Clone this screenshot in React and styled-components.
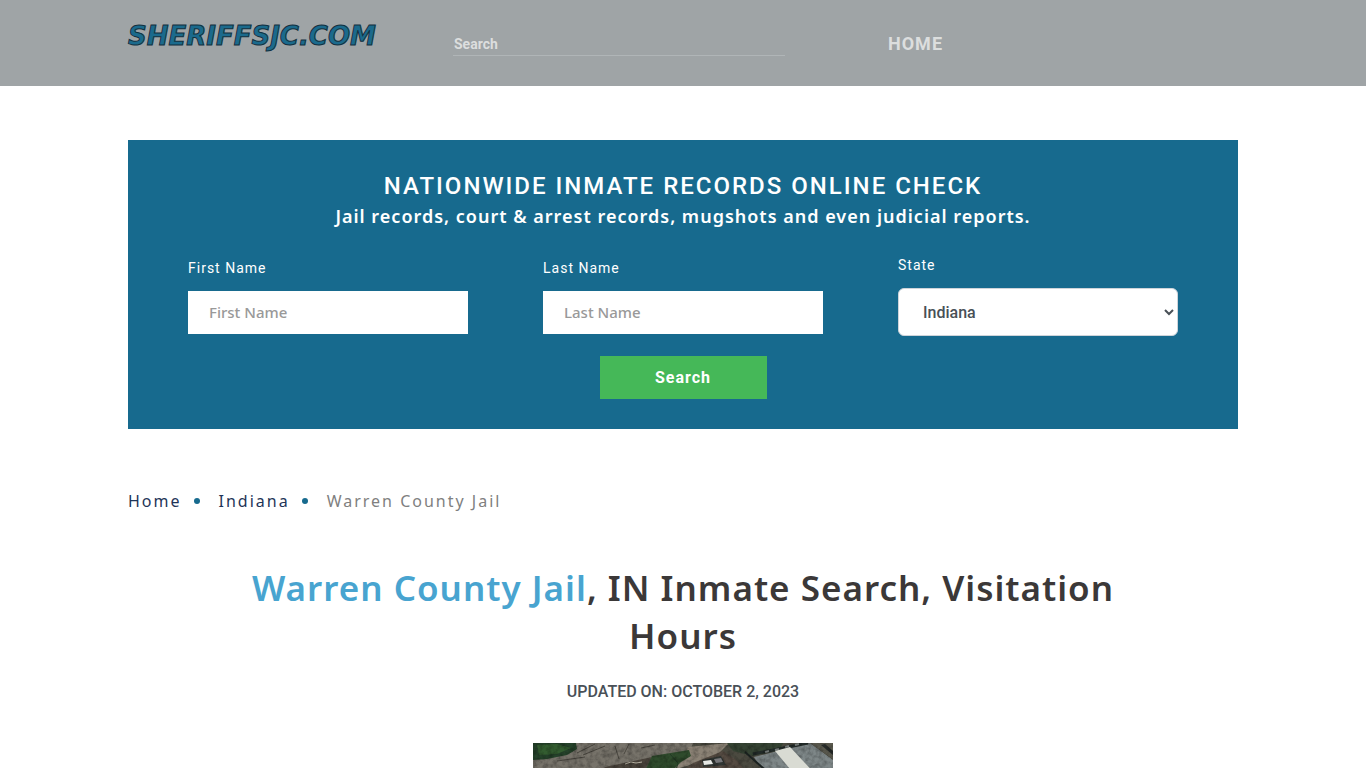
import React, { useState } from "react";
import styled, { createGlobalStyle } from "styled-components";

const App = () => {
  const [keyword, setKeyword] = useState("");
  const [firstName, setFirstName] = useState("");
  const [lastName, setLastName] = useState("");
  const [region, setRegion] = useState("Indiana");

  const handleSubmit = (e) => {
    e.preventDefault();
  };

  return (
    <>
      <GlobalStyle />
      <Header>
        <HeaderInner>
          <Logo href="/">SHERIFFSJC.COM</Logo>
          <form role="search" onSubmit={handleSubmit}>
            <HeaderSearch
              type="text"
              aria-label="Search"
              placeholder="Search"
              value={keyword}
              onChange={(e) => setKeyword(e.target.value)}
            />
          </form>
          <nav>
            <NavLink href="/">HOME</NavLink>
          </nav>
        </HeaderInner>
      </Header>

      <Container>
        <SearchPanel onSubmit={handleSubmit}>
          <PanelTitle>NATIONWIDE INMATE RECORDS ONLINE CHECK</PanelTitle>
          <PanelText>
            Jail records, court &amp; arrest records, mugshots and even judicial
            reports.
          </PanelText>
          <FieldRow>
            <Field>
              <Label htmlFor="firstName">First Name</Label>
              <Input
                id="firstName"
                type="text"
                placeholder="First Name"
                value={firstName}
                onChange={(e) => setFirstName(e.target.value)}
              />
            </Field>
            <Field>
              <Label htmlFor="lastName">Last Name</Label>
              <Input
                id="lastName"
                type="text"
                placeholder="Last Name"
                value={lastName}
                onChange={(e) => setLastName(e.target.value)}
              />
            </Field>
            <Field>
              <Label htmlFor="state">State</Label>
              <Select
                id="state"
                value={region}
                onChange={(e) => setRegion(e.target.value)}
              >
                <option>Indiana</option>
              </Select>
            </Field>
          </FieldRow>
          <SubmitButton type="submit">Search</SubmitButton>
        </SearchPanel>

        <Breadcrumb aria-label="Breadcrumb">
          <CrumbLink href="/">Home</CrumbLink>
          <Dot />
          <CrumbLink href="/indiana">Indiana</CrumbLink>
          <Dot />
          <span>Warren County Jail</span>
        </Breadcrumb>

        <PageTitle>
          <em>Warren County Jail</em>, IN Inmate Search, Visitation Hours
        </PageTitle>
        <Updated>UPDATED ON: OCTOBER 2, 2023</Updated>
        <AerialPhoto />
      </Container>
    </>
  );
};

export default App;

// aerial view of the jail and its parking lot
const AerialPhoto = () => (
  <Photo viewBox="0 0 300 200" role="img" aria-label="Warren County Jail">
    <defs>
      <filter id="grain" x="0" y="0" width="100%" height="100%">
        <feTurbulence type="fractalNoise" baseFrequency="0.2" numOctaves="3" />
        <feColorMatrix
          values="0 0 0 0 0
                  0 0 0 0 0
                  0 0 0 0 0
                  1.2 0 0 0 -0.45"
        />
      </filter>
    </defs>
    <rect width="300" height="200" fill="#4b4a40" />
    <path d="M38 0H160L157 8L72 25L0 28V16L40 9Z" fill="#77736a" />
    <path d="M155 4L196 0L184 12L160 21L140 27H130L150 16Z" fill="#8b8275" />
    <path d="M0 0H43L44 6L34 12L14 16L0 17Z" fill="#25422a" />
    <path d="M4 2L24 1L38 5L24 11L6 12Z" fill="#335c30" />
    <path d="M72 24L119 14L112 25L110 40H60Z" fill="#49433b" />
    <path d="M119 13L156 7L158 13L148 19L139 28H112Z" fill="#2f4b2c" />
    <path d="M137 11L145 20L143 27" stroke="#213a24" fill="none" />
    <path d="M194 0H250L247 7L220 13L200 8Z" fill="#354333" />
    <path d="M160 20L190 8L205 18L212 28H150Z" fill="#554b42" />
    <path d="M169 17L188 13L193 22L170 24Z" fill="#313633" />
    <path d="M221 14L277 0L300 17V60H250Z" fill="#7e8788" />
    <path d="M212 9L240 34" stroke="#1d2422" strokeWidth="2" />
    <path d="M220 11L275 0" stroke="#222a28" strokeWidth="3" />
    <path
      d="M232 9l4-1M242 7l4-1M252 4l4-1M262 2l4-1"
      stroke="#7c8280"
      strokeWidth="2"
    />
    <path d="M277 0H300V16Z" fill="#5c5b50" />
    <path d="M288 2L292 1L300 8V12Z" fill="#262a29" />
    <path
      d="M44 10L62 1M50 12L72 3M82 3l4 13M96 1l-5 10M108 5l14-3M24 18l28-4"
      stroke="#49463f"
      fill="none"
    />
    <path d="M92 21l6-2l5 1l6-1" stroke="#b9b4a5" fill="none" />
    <rect width="300" height="200" filter="url(#grain)" opacity="0.5" />
    <path d="M242 8L257 4L285 34L262 32Z" fill="#d9dbd3" />
    <path d="M170 18L178 17L180 21L171 22Z" fill="#e6e8e4" />
    <path d="M181 16L188 15L190 19L183 20Z" fill="#77777a" />
  </Photo>
);

const GlobalStyle = createGlobalStyle`
  * {
    box-sizing: border-box;
  }

  body {
    margin: 0;
    background-color: #fff;
    font-family: "Noto Sans", sans-serif;
    font-size: 16px;
  }

  a {
    text-decoration: none;
  }
`;

const Container = styled.div`
  width: 100%;
  max-width: 1140px;
  margin: 0 auto;
  padding: 0 15px;
`;

const Header = styled.header`
  background-color: #9fa4a6;
`;

const HeaderInner = styled(Container)`
  display: grid;
  grid-template-columns: 325fr 435fr 350fr;
  align-items: start;
  height: 86px;
  padding-top: 22px;
`;

const Logo = styled.a`
  color: #1b6a8c;
  font-family: "DejaVu Sans", sans-serif;
  font-size: 26px;
  font-style: italic;
  font-weight: 700;
  line-height: 28px;
  -webkit-text-stroke: 1px #12303f;
`;

const HeaderSearch = styled.input`
  width: 332px;
  max-width: 90%;
  height: 24px;
  margin-top: 10px;
  padding: 0 1px;
  border: none;
  border-bottom: 1px solid #b0b5b7;
  background: transparent;
  color: #dcdede;
  font-family: Roboto, sans-serif;
  font-size: 14px;
  font-weight: 700;

  &::placeholder {
    color: #dcdede;
  }

  &:focus {
    outline: none;
  }
`;

const NavLink = styled.a`
  display: block;
  margin-top: 10px;
  color: #dcdede;
  font-family: Roboto, sans-serif;
  font-size: 18px;
  font-weight: 700;
  letter-spacing: 1px;
  line-height: 24px;
`;

const SearchPanel = styled.form`
  margin-top: 54px;
  padding: 30px 60px;
  background-color: #176a8e;
  color: #fff;
  text-align: center;
`;

const PanelTitle = styled.h2`
  margin: 0;
  font-family: Roboto, sans-serif;
  font-size: 24px;
  font-weight: 500;
  letter-spacing: 2px;
  line-height: 32px;
`;

const PanelText = styled.p`
  margin: 0 0 23px;
  font-size: 18px;
  font-weight: 600;
  letter-spacing: 1px;
  line-height: 28px;
`;

const FieldRow = styled.div`
  display: grid;
  grid-template-columns: repeat(3, 1fr);
  column-gap: 75px;
  align-items: center;
  margin-bottom: 20px;
  text-align: left;
`;

const Field = styled.div`
  display: flex;
  flex-direction: column;
`;

const Label = styled.label`
  margin-bottom: 11px;
  font-family: Roboto, sans-serif;
  font-size: 14px;
  letter-spacing: 1px;
  line-height: 24px;
`;

const Input = styled.input`
  width: 100%;
  height: 43px;
  padding: 0 20px;
  border: 1px solid #fff;
  background-color: #fff;
  color: #495057;
  font-family: "Noto Sans", sans-serif;
  font-size: 15px;
  font-weight: 500;

  &::placeholder {
    color: #999;
  }
`;

const Select = styled.select`
  width: 100%;
  height: 48px;
  padding: 0 0 0 20px;
  border: 1px solid #ced4da;
  border-radius: 6px;
  background-color: #fff;
  color: #495057;
  font-family: Roboto, sans-serif;
  font-size: 16px;
  font-weight: 500;
`;

const SubmitButton = styled.button`
  display: block;
  width: 167px;
  height: 43px;
  margin: 0 auto;
  border: none;
  background-color: #45b858;
  color: #fff;
  font-family: Roboto, sans-serif;
  font-size: 16px;
  font-weight: 700;
  letter-spacing: 1px;
  cursor: pointer;
`;

const Breadcrumb = styled.nav`
  display: flex;
  align-items: center;
  margin-top: 60px;
  color: #808080;
  letter-spacing: 2px;
  line-height: 24px;
`;

const CrumbLink = styled.a`
  color: #1f3558;
`;

const Dot = styled.span`
  width: 6px;
  height: 6px;
  margin: 0 19px 0 12px;
  border-radius: 50%;
  background-color: #176a8e;
`;

const PageTitle = styled.h1`
  max-width: 920px;
  margin: 51px auto 0;
  color: #3b3838;
  font-family: "Noto Sans", sans-serif;
  font-size: 35px;
  font-weight: 600;
  letter-spacing: 1px;
  line-height: 48px;
  text-align: center;

  em {
    color: #48a4d0;
    font-style: normal;
  }
`;

const Updated = styled.p`
  margin: 20px 0 39px;
  color: #495057;
  font-family: Roboto, sans-serif;
  font-weight: 500;
  line-height: 24px;
  text-align: center;
`;

const Photo = styled.svg`
  display: block;
  width: 300px;
  height: 200px;
  margin: 0 auto;
`;
